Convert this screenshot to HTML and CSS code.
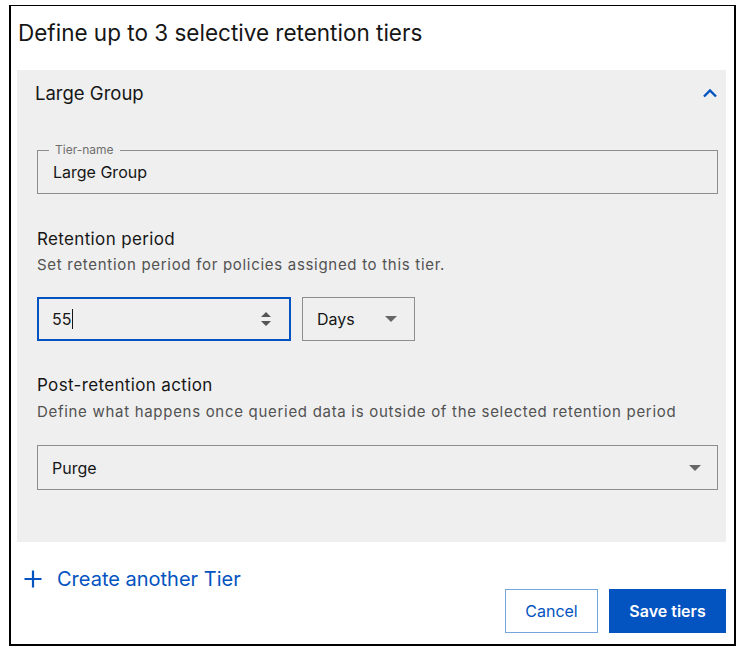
FILE: index.html
```html
<!DOCTYPE html>
<html>
<head>
<meta charset="utf-8">
<link rel="stylesheet" href="styles.css">
</head>
<body>
<div class="dialog">
  <h1 class="title">Define up to 3 selective retention tiers</h1>
  <section class="tier">
    <div class="tier-head">
      <span class="tier-title">Large Group</span>
      <svg class="chevron" width="16" height="10" viewBox="0 0 16 10"><path d="M2 8.5 L8 2.5 L14 8.5" fill="none" stroke="#0353c0" stroke-width="2.4"/></svg>
    </div>
    <div class="outlined">
      <span class="legend">Tier-name</span>
      <span class="value">Large Group</span>
    </div>

    <div class="group">
      <div class="label">Retention period</div>
      <div class="help">Set retention period for policies assigned to this tier.</div>
      <div class="row">
        <div class="number">
          <span class="value">55<span class="caret"></span></span>
          <svg class="spinner" width="12" height="18" viewBox="0 0 12 18"><path d="M6 2 L11 7 L1 7 Z M1 11 L11 11 L6 16 Z" fill="#555"/></svg>
        </div>
        <div class="select small">
          <span class="value">Days</span>
          <span class="tri"></span>
        </div>
      </div>
    </div>

    <div class="group second">
      <div class="label">Post-retention action</div>
      <div class="help">Define what happens once queried data is outside of the selected retention period</div>
      <div class="select wide">
        <span class="value">Purge</span>
        <span class="tri"></span>
      </div>
    </div>
  </section>

  <div class="footer">
    <div class="create">
      <svg class="plus" width="20" height="20" viewBox="0 0 20 20"><path d="M10 1.5 V18.5 M1.5 10 H18.5" stroke="#0353c0" stroke-width="2.2"/></svg>
      <span>Create another Tier</span>
    </div>
    <div class="actions">
      <button class="btn ghost">Cancel</button>
      <button class="btn primary">Save tiers</button>
    </div>
  </div>
</div>
</body>
</html>
```

FILE: styles.css
```css
* { box-sizing: border-box; }
html, body { margin: 0; padding: 0; background: #fff; }
body { font-family: Inter, "Noto Sans", sans-serif; color: #161616; }

.dialog {
  margin: 5px 0 0 9px;
  width: 727px;
  height: 641px;
  border: 2px solid #000;
  border-top-width: 1px;
  padding: 0 8px 0 6px;
  display: flex;
  flex-direction: column;
}

.title {
  margin: 0 0 0 1px;
  padding-top: 13px;
  font-size: 22.5px;
  font-weight: 400;
  line-height: 28px;
  height: 64px;
}

.tier {
  background: #efefef;
  height: 472px;
  padding: 0 8px 0 20px;
}

.tier-head {
  height: 46px;
  display: flex;
  align-items: center;
  justify-content: space-between;
}
.tier-title { font-size: 18.5px; margin-left: -2px; }

.outlined {
  margin-top: 34px;
  border: 1px solid #8d8d8d;
  padding: 0 15px;
  height: 44px;
  display: flex;
  align-items: center;
  position: relative;
}
.outlined .legend {
  position: absolute;
  left: 11px;
  top: -8px;
  background: #efefef;
  font-size: 12px;
  color: #6f6f6f;
  padding: 0 6px;
  line-height: 14px;
}

.group { margin-top: 34px; }
.group.second { margin-top: 33px; }
.label { font-size: 17px; line-height: 22px; letter-spacing: 0.35px; }
.help { font-size: 15px; color: #525252; line-height: 20px; margin-top: 5px; letter-spacing: 0.7px; }
.second .help { margin-top: 6px; }

.row { display: flex; gap: 11px; margin-top: 22px; }

.number {
  width: 254px; height: 44px;
  border: 2px solid #0353c0;
  display: flex; align-items: center; justify-content: space-between;
  padding: 0 17px 0 13px;
}
.value { font-size: 16px; }
.caret { display: inline-block; width: 1px; height: 20px; background: #161616; vertical-align: -4px; margin-left: 1px; }

.select {
  height: 44px;
  border: 1px solid #8d8d8d;
  display: flex; align-items: center; justify-content: space-between;
  padding: 0 17px 0 14px;
}
.select.small { width: 113px; }
.select.wide { margin-top: 23px; height: 45px; padding-right: 16px; }
.tri {
  width: 0; height: 0;
  border-left: 6.5px solid transparent;
  border-right: 6.5px solid transparent;
  border-top: 6.5px solid #666;
}

.footer { flex: 1; }
.create {
  display: flex; align-items: center; gap: 14px;
  color: #0353c0; font-size: 20px;
  margin: 25px 0 0 6px;
}
.actions { display: flex; gap: 11px; justify-content: flex-end; margin-top: -2px; padding-right: 0; }
.btn { font-family: Inter, sans-serif; font-size: 16px; height: 44px; cursor: pointer; }
.btn.ghost { width: 93px; background: #fff; color: #0353c0; border: 1px solid #78a4dc; }
.btn.primary { width: 117px; background: #0353c0; color: #fff; border: none; font-weight: 600; }
```
